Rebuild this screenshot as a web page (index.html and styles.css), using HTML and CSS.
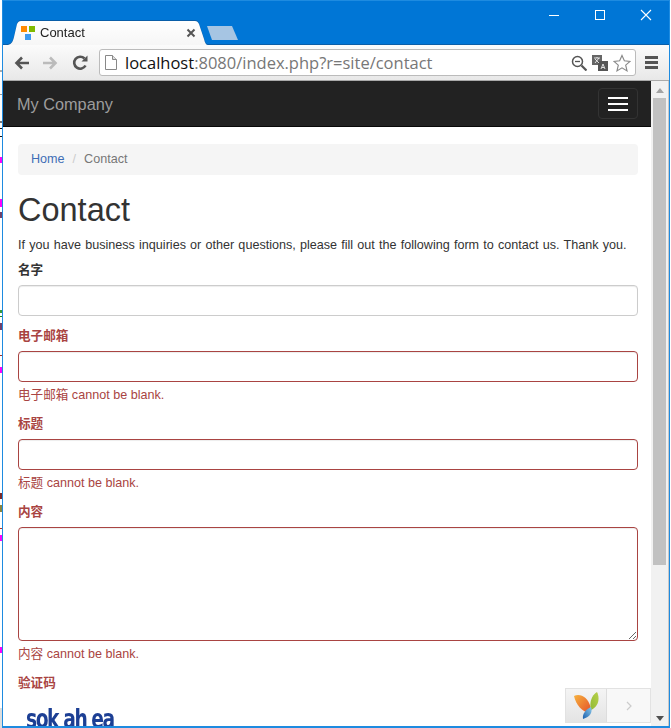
FILE: index.html
```html
<!DOCTYPE html>
<html lang="en">
<head>
<meta charset="utf-8">
<title>Contact</title>
<link rel="stylesheet" href="styles.css">
</head>
<body>
<svg class="gutter" width="2" height="728" viewBox="0 0 2 728">
  <rect x="0" y="70" width="2" height="2" fill="#aaa"/>
  <rect x="0" y="94" width="2" height="1" fill="#999"/>
  <rect x="0" y="121" width="2" height="2" fill="#777"/>
  <rect x="0" y="128" width="2" height="1" fill="#111"/>
  <rect x="0" y="136" width="2" height="1" fill="#111"/>
  <rect x="0" y="157" width="2" height="6" fill="#f0f"/>
  <rect x="0" y="199" width="2" height="8" fill="#f0f"/>
  <rect x="0" y="212" width="2" height="6" fill="#70406a"/>
  <rect x="0" y="310" width="2" height="3" fill="#3a9a3a"/>
  <rect x="0" y="316" width="2" height="1" fill="#1a8a1a"/>
  <rect x="0" y="323" width="2" height="7" fill="#70406a"/>
  <rect x="0" y="355" width="2" height="1" fill="#a03030"/>
  <rect x="0" y="367" width="2" height="6" fill="#f0f"/>
  <rect x="0" y="493" width="2" height="6" fill="#7a2a2a"/>
  <rect x="0" y="505" width="2" height="7" fill="#8a8440"/>
  <rect x="0" y="528" width="2" height="1" fill="#b03020"/>
  <rect x="0" y="535" width="2" height="6" fill="#f0f"/>
  <rect x="0" y="647" width="2" height="6" fill="#f0f"/>
  <rect x="0" y="708" width="2" height="20" fill="#ddd"/>
</svg>
<div class="window">
  <header class="titlebar">
    <div class="tabstrip">
      <div class="tab-wrap">
        <div class="tab">
          <svg class="favicon" width="14" height="14" viewBox="0 0 14 14"><rect x="0" y="0" width="6" height="6" fill="#ff8a00"/><rect x="8" y="0" width="6" height="6" fill="#7fba00"/><rect x="4" y="8" width="6" height="6" fill="#3f9bf0"/></svg>
          <span class="tab-title">Contact</span>
          <span class="tab-close">
            <svg width="10" height="10" viewBox="0 0 10 10"><path d="M1.500 1.500l7 7M8.500 1.500l-7 7" stroke="#555" stroke-width="2"/></svg>
          </span>
        </div>
      </div>
      <div class="newtab"></div>
    </div>
    <div class="winctrls">
      <svg width="12" height="12" viewBox="0 0 12 12"><path d="M1 6.500h10" stroke="#fff"/></svg>
      <svg width="12" height="12" viewBox="0 0 12 12"><rect x="1.500" y="1.500" width="9" height="9" fill="none" stroke="#fff"/></svg>
      <svg width="12" height="12" viewBox="0 0 12 12"><path d="M1 1l10 10M11 1L1 11" stroke="#fff" stroke-width="1.100"/></svg>
    </div>
  </header>
  <div class="toolbar">
    <div class="nav-btns">
      <svg width="15" height="14" viewBox="0 0 15 14"><path d="M15 7H3M8 1.500L2.500 7 8 12.500" fill="none" stroke="#555" stroke-width="2.600"/></svg>
      <svg width="15" height="14" viewBox="0 0 15 14"><path d="M0 7h12M7 1.500L12.500 7 7 12.500" fill="none" stroke="#bbb" stroke-width="2.600"/></svg>
      <svg width="16" height="16" viewBox="0 0 16 16"><path d="M13.500 10.500A6 6 0 1 1 12.500 3.500" fill="none" stroke="#555" stroke-width="2.600"/><path d="M9.500 6.500h6v-6z" fill="#555"/></svg>
    </div>
    <div class="omnibox">
      <svg class="page-ico" width="12" height="15" viewBox="0 0 12 15"><path d="M.5.500h7l4 4v10H.5z" fill="#fff" stroke="#888"/><path d="M7.500.500v4h4" fill="#ddd" stroke="#888"/></svg>
      <span class="url"><span class="host">localhost</span>:8080/index.php?r=site/contact</span>
      <svg class="omni-ico" width="16" height="16" viewBox="0 0 16 16"><circle cx="6.500" cy="6.500" r="5" fill="none" stroke="#555" stroke-width="1.500"/><path d="M4 6.500h5" stroke="#555" stroke-width="1.300"/><path d="M10.500 10.500l5 5" stroke="#555" stroke-width="2.200"/></svg>
      <svg class="omni-ico" width="16" height="16" viewBox="0 0 16 16"><rect x="0" y="0" width="10" height="10" fill="#666"/><rect x="6" y="6" width="10" height="10" fill="#555"/><path d="M2 3h6M5 2v1M3 8l4-5M3 4l4 4" stroke="#fff" stroke-width=".8" fill="none"/><path d="M9 14l2-5 2 5M10 12.500h2" stroke="#fff" stroke-width=".8" fill="none"/></svg>
      <svg class="omni-ico star" width="18" height="18" viewBox="0 0 19 18"><path d="M9.500 1l2.500 5.700 6 .6-4.600 4 1.400 6-5.300-3.200-5.300 3.200 1.400-6-4.600-4 6-.6z" fill="#fff" stroke="#888" stroke-width="1.200"/></svg>
    </div>
    <div class="menu-ico"><i></i><i></i><i></i></div>
  </div>
  <div class="viewport">
    <main class="page">
      <nav class="navbar">
        <a class="brand">My Company</a>
        <span class="toggle"><i></i><i></i><i></i></span>
      </nav>
      <div class="container">
        <ul class="breadcrumb">
          <li><a>Home</a></li>
          <li class="sep">/</li>
          <li class="active">Contact</li>
        </ul>
        <h1>Contact</h1>
        <p class="intro">If you have business inquiries or other questions, please fill out the following form to contact us. Thank you.</p>
        <form>
          <div class="group plain">
            <label>名字</label>
            <input class="field" type="text">
          </div>
          <div class="group error">
            <label>电子邮箱</label>
            <input class="field" type="text">
            <p class="help">电子邮箱 cannot be blank.</p>
          </div>
          <div class="group error">
            <label>标题</label>
            <input class="field" type="text">
            <p class="help">标题 cannot be blank.</p>
          </div>
          <div class="group error">
            <label>内容</label>
            <textarea class="field area"></textarea>
            <p class="help">内容 cannot be blank.</p>
          </div>
          <div class="group error">
            <label>验证码</label>
            <div class="captcha"><span class="captcha-text">sok ah ea</span></div>
          </div>
        </form>
      </div>
      <div class="debug">
        <span class="debug-logo">
          <svg width="25" height="27" viewBox="0 0 25 27">
            <defs>
              <linearGradient id="lo" x1="0" y1="0" x2="1" y2="1"><stop offset="0" stop-color="#f7b23e"/><stop offset="1" stop-color="#e4502a"/></linearGradient>
              <linearGradient id="lg" x1="1" y1="0" x2="0" y2="1"><stop offset="0" stop-color="#b9d04a"/><stop offset="1" stop-color="#8fbb34"/></linearGradient>
              <linearGradient id="lb" x1="1" y1="0" x2="0" y2="1"><stop offset="0" stop-color="#8cc8e8"/><stop offset="1" stop-color="#1a5fae"/></linearGradient>
            </defs>
            <path d="M0 4C6 1 14 5 16.500 15L16 21C8 20 2 13 0 4z" fill="url(#lo)"/>
            <path d="M17 18C15 10 18 3 23 0 26 6 25 14 17 18z" fill="url(#lg)"/>
            <path d="M9 27C8 22 12 17 17 15 19 20 16 25 9 27z" fill="url(#lb)"/>
          </svg>
        </span>
        <span class="debug-next">
          <svg width="6" height="10" viewBox="0 0 6 10"><path d="M1 1l4 4-4 4" fill="none" stroke="#ccc" stroke-width="1.200"/></svg>
        </span>
      </div>
    </main>
    <aside class="scrollbar">
      <span class="arrow up"></span>
      <span class="track"><span class="thumb"></span></span>
      <span class="arrow down"></span>
    </aside>
  </div>
</div>
</body>
</html>
```
FILE: styles.css
```css
* { box-sizing: border-box; }
html, body { margin: 0; height: 100%; overflow: hidden; background: #fff; }
body { display: flex; width: 671px; height: 728px; font-family: "Liberation Sans", "Noto Sans CJK SC", sans-serif; font-size: 12.6px; line-height: 18px; color: #333; }

.gutter { flex: none; display: block; }
.window { width: 668px; height: 728px; flex: none; display: flex; flex-direction: column; border: solid #1e8be0; border-width: 1px 1px 2px 1px; background: #0076d6; }

.titlebar { height: 43px; display: flex; justify-content: space-between; align-items: flex-start; flex: none; background: #0076d6; position: relative; z-index: 1; }
.tabstrip { display: flex; align-items: flex-start; height: 44px; padding: 20px 0 0 5px; }
.tab-wrap { filter: drop-shadow(0 -1px 0 #0a5ea8); }
.tab { width: 200px; height: 24px; display: flex; align-items: center; padding: 0 12px 0 13px; background: linear-gradient(#fff, #f6f6f6); clip-path: path("M0 24C4 23 5 20 6 16L9 3C10 1 11 0 13 0L187 0C189 0 190 1 191 3L196 18C197 22 198 24 200 24Z"); }
.favicon { flex: none; margin-right: 5px; }
.tab-title { font-size: 13px; color: #222; flex: 1; }
.tab-close { display: flex; }
.newtab { width: 31px; height: 14px; margin: 5px 0 0 -1px; background: #a6c5e3; clip-path: polygon(0 0, 25px 0, 31px 100%, 5px 100%); }
.winctrls { display: flex; gap: 34px; padding: 8px 17px 0 0; }

.toolbar { height: 37px; flex: none; display: flex; align-items: center; padding: 0 0 0 11px; background: linear-gradient(#fbfbfb, #e8e8e8); border-top: 1px solid #0a5ea8; border-bottom: 1px solid #aaa; }
.nav-btns { display: flex; align-items: center; gap: 14px; margin-right: 11px; }
.omnibox { width: 537px; height: 27px; flex: none; display: flex; align-items: center; padding: 0 4px 0 5px; background: #fff; border: 1px solid #bbb; border-radius: 3px; }
.page-ico { flex: none; margin-right: 8px; }
.url { flex: 1; font-family: "Open Sans", "Noto Sans", sans-serif; font-size: 16.5px; color: #777; white-space: nowrap; }
.host { color: #111; }
.omni-ico { flex: none; margin-left: 5px; }
.menu-ico { display: flex; flex-direction: column; gap: 2px; margin-left: 9px; }
.menu-ico i { display: block; width: 13px; height: 3px; background: #555; }

.viewport { flex: 1; min-height: 0; display: flex; background: #fff; }
.page { position: relative; width: 648px; overflow: hidden; flex: none; }
.navbar { height: 46px; display: flex; align-items: center; justify-content: space-between; padding: 0 13px 0 14px; background: #222; border-bottom: 1px solid #080808; }
.brand { font-size: 16.3px; color: #9d9d9d; }
.toggle { width: 40px; height: 31px; display: flex; flex-direction: column; justify-content: center; align-items: center; gap: 4px; border: 1px solid #333; border-radius: 4px; }
.toggle i { display: block; width: 20px; height: 2px; background: #fff; }

.container { padding: 17px 13px 0 15px; }
.breadcrumb { display: flex; gap: 8px; list-style: none; margin: 0; padding: 6px 13px 0; height: 31px; background: #f5f5f5; border-radius: 4px; }
.breadcrumb a { color: #3f6db5; }
.sep { color: #ccc; }
.active { color: #777; }
h1 { margin: 17px 0 8px; font-size: 32.5px; font-weight: 400; line-height: 36px; color: #333; }
.intro { margin: 0 0 7px; white-space: nowrap; word-spacing: .68px; }
.group { margin-bottom: 11px; }
label { display: block; font-weight: 700; line-height: 18px; margin-bottom: 6px; }
.field { display: block; width: 100%; height: 31px; border: 1px solid #ccc; border-radius: 4px; background: #fff; box-shadow: inset 0 1px 1px rgba(0,0,0,.075); outline: 0; padding: 0; }
.area { height: 114px; resize: vertical; }
.help { margin: 4px 0 0; color: #a94442; }
.error label { color: #a94442; }
.error .field { border-color: #a94442; }
.captcha { margin-top: 12px; height: 34px; padding-left: 8px; }
.captcha-text { display: inline-block; font-family: "DejaVu Sans", sans-serif; font-weight: 700; font-size: 26px; line-height: 30px; letter-spacing: -2px; color: #1c3f94; white-space: nowrap; transform: scaleX(.72); transform-origin: left center; }

.debug { position: absolute; right: 0; bottom: 3px; display: flex; height: 35px; border: 1px solid #e2e2e2; background: #f8f8f8; }
.debug-logo { width: 41px; display: flex; align-items: center; justify-content: center; background: linear-gradient(#f4f4f4, #e4e4e4); border-right: 1px solid #ddd; }
.debug-next { width: 43px; display: flex; align-items: center; justify-content: center; }

.scrollbar { width: 18px; flex: none; display: flex; flex-direction: column; background: #f1f1f1; border-right: 1px solid #c8c8c8; }
.arrow { height: 17px; width: 100%; flex: none; position: relative; }
.arrow::after { content: ""; position: absolute; left: 5px; border: 4px solid transparent; border-top-width: 0; border-bottom-width: 0; }
.up::after { top: 7px; border-bottom: 5px solid #a3a3a3; }
.down::after { top: 7px; border-top: 5px solid #505050; }
.track { flex: 1; width: 100%; display: block; }
.thumb { display: block; height: 467px; width: 13px; margin-left: 2px; background: #c1c1c1; }
```
